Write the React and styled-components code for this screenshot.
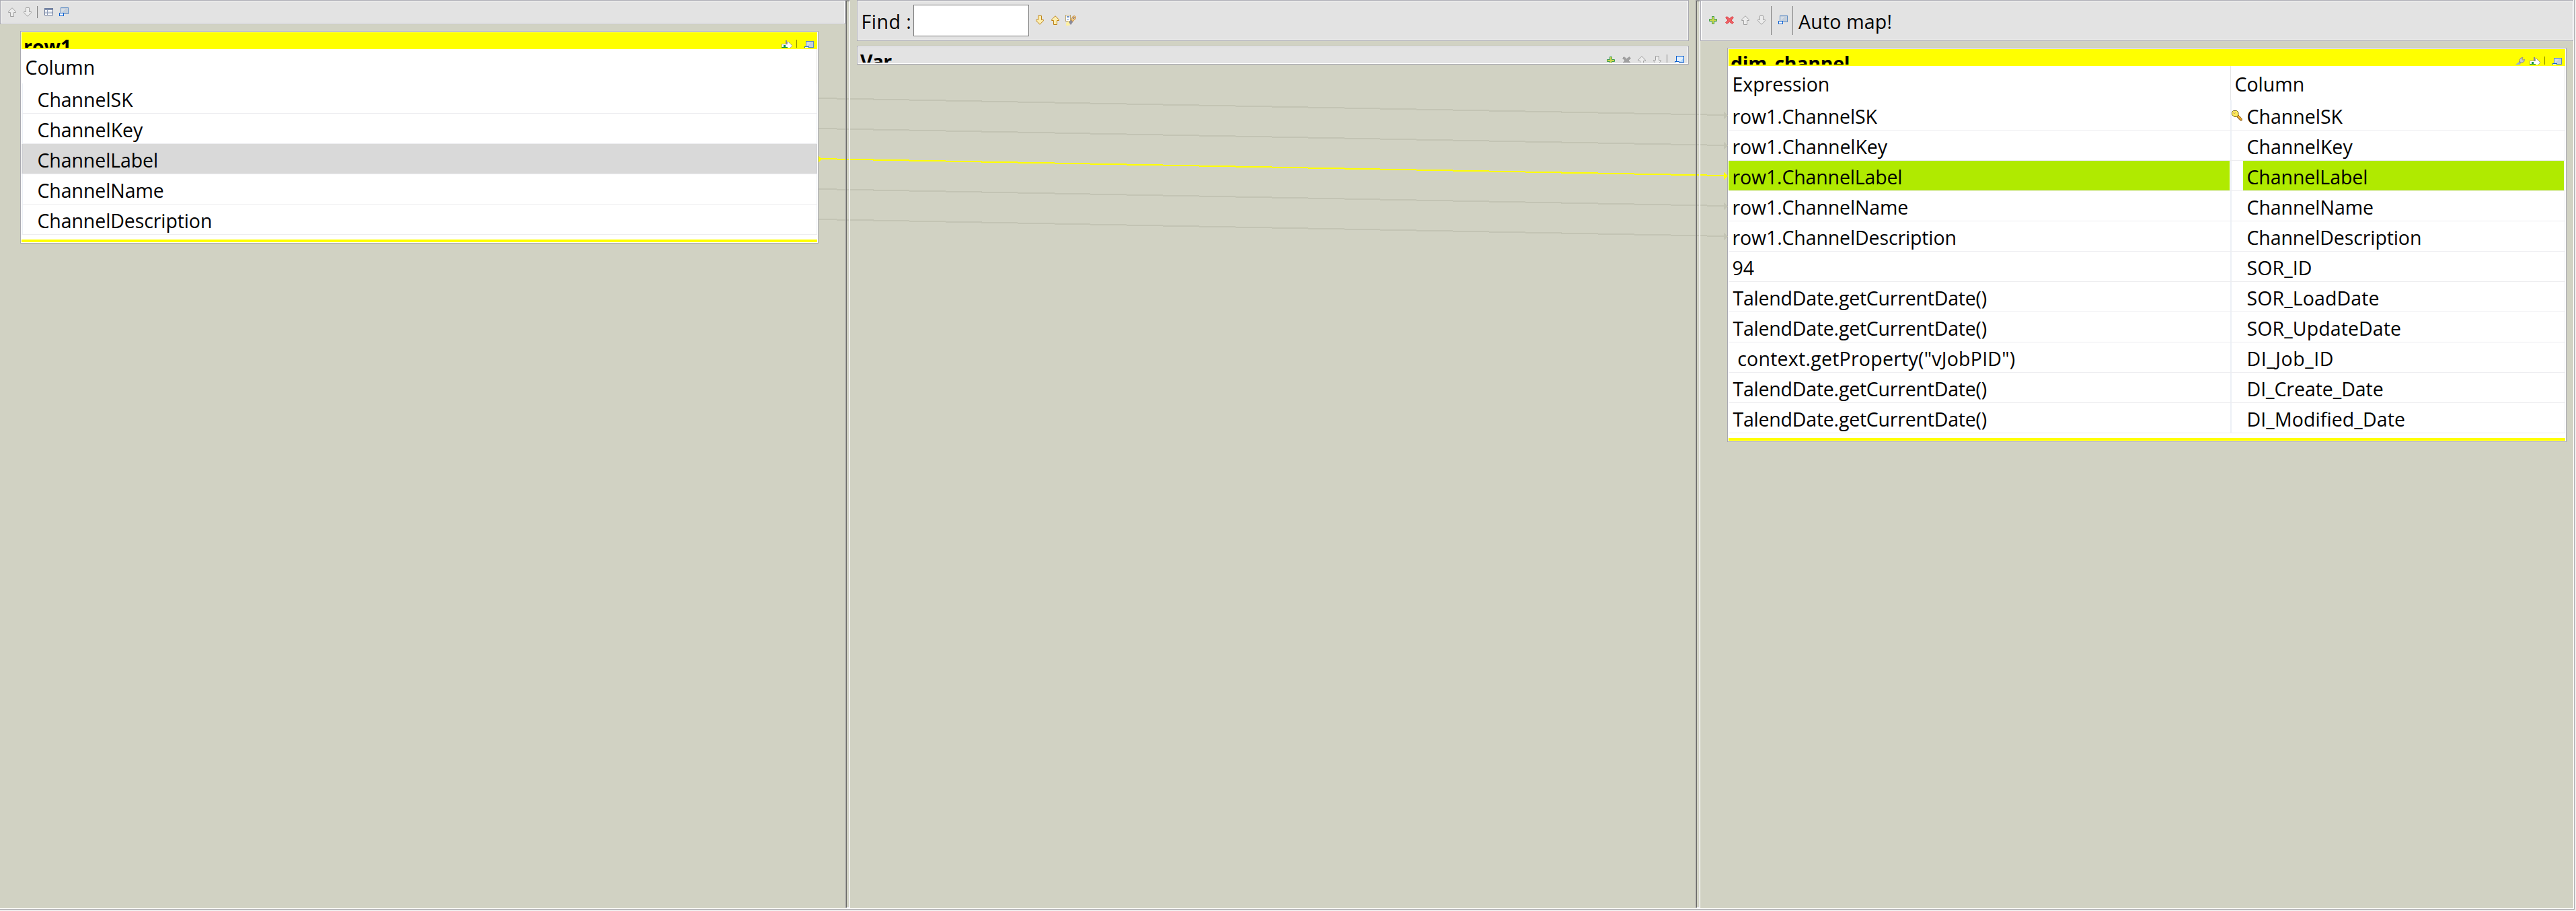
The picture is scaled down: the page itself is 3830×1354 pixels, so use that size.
import React from 'react';
import styled, { createGlobalStyle, css } from 'styled-components';

const Global = createGlobalStyle`
  html, body { margin: 0; padding: 0; background: #f0f0f0; }
  *, *::before, *::after { box-sizing: border-box; }
  body { font-family: "Open Sans", "Noto Sans", sans-serif; color: #000; overflow: hidden; }
  svg { display: block; flex: none; }
`;

const FACE = '#e3e3e3';
const EDGE = '#a9a9b1';
const GRID = '#ededf0';
const YELLOW = '#ffff00';
const GREEN = '#b0ea00';

const Frame = styled.div`
  position: relative;
  width: 3828px;
  height: 1352px;
  display: grid;
  grid-template-columns: 1257px 7px 1257px 7px 1298px;
  background: #d1d2c3;
  border-right: 1px solid #a9a9ad;
  border-bottom: 1px solid #a9a9ad;
  box-shadow: inset -1px -1px 0 #fff;
  padding: 0 1px 1px 0;
`;

const Pane = styled.section`
  display: flex;
  flex-direction: column;
  align-items: stretch;
  padding: ${(p) => p.$pad || 0};
`;

const Sash = styled.div`
  position: relative;
  z-index: 2;
  border: 1px solid;
  border-color: #a0a0a0 #fff #fff #a0a0a0;
  box-shadow: inset 1px 1px 0 #696969, inset -1px -1px 0 #e3e3e3;
`;

const Bar = styled.div`
  display: flex;
  align-items: flex-start;
  height: ${(p) => p.$h}px;
  border: 1px solid ${EDGE};
  box-shadow: inset 0 0 0 1px #fff;
  background: ${FACE};
  overflow: hidden;
`;

const Slot = styled.span`
  display: block;
  flex: none;
  margin: ${(p) => p.$t}px 0 0 ${(p) => p.$l}px;
`;

const Separator = styled.i`
  flex: none;
  width: 1px;
  height: ${(p) => p.$h}px;
  margin: ${(p) => p.$t}px 0 0 ${(p) => p.$l}px;
  background: ${(p) => p.$c || '#808080'};
`;

const Label = styled.span`
  flex: none;
  width: ${(p) => (p.$w ? `${p.$w}px` : 'auto')};
  font-size: 28.5px;
  line-height: 40px;
  white-space: pre;
  letter-spacing: ${(p) => p.$ls || 0}px;
  margin: 11px 0 0 ${(p) => p.$l || 0}px;
`;

const Search = styled.input`
  flex: none;
  width: 172px;
  height: 47px;
  margin: 6px 0 0 ${(p) => p.$l}px;
  padding: 0 8px;
  border: 1px solid #7a7a7a;
  background: #fff;
  font: inherit;
`;

const Card = styled.div`
  border: 1px solid ${EDGE};
  padding: 1px;
  background: #fff;
`;

const TitleBar = styled.div`
  display: flex;
  align-items: flex-start;
  justify-content: space-between;
  overflow: hidden;
  height: ${(p) => p.$h}px;
  background: ${(p) => p.$bg};
  border-bottom: ${(p) => p.$lip}px solid ${(p) => p.$bg};
`;

const Title = styled.strong`
  flex: none;
  font-size: 28.5px;
  font-weight: 700;
  line-height: 40px;
  white-space: pre;
  letter-spacing: ${(p) => p.$ls || 0}px;
  margin: 1px 0 0 ${(p) => p.$l}px;
`;

const Tools = styled.div`
  display: flex;
  align-items: flex-start;
  padding-right: ${(p) => p.$r}px;
`;

const Footer = styled.div`
  height: 4px;
  margin-top: 7px;
  background: ${YELLOW};
`;

const Row = styled.div`
  display: grid;
  grid-template-columns: ${(p) => p.$cols};
  height: ${(p) => (p.$head ? 51 : 45)}px;
  padding-left: ${(p) => p.$inset || 0}px;
  border-bottom: ${(p) => (p.$head ? 0 : 1)}px solid ${GRID};
  background: ${(p) => p.$bg || 'transparent'};
`;

const Cell = styled.div`
  display: flex;
  align-items: flex-start;
  padding-left: ${(p) => p.$l}px;
  font-size: 28.5px;
  line-height: ${(p) => (p.$head ? 54 : 48)}px;
  height: 100%;
  overflow: hidden;
  white-space: pre;
  letter-spacing: ${(p) => p.$ls || 0}px;
  ${(p) => p.$bg && css`background: ${p.$bg};`}
  ${(p) => p.$rule && css`box-shadow: ${p.$rule};`}
`;

const Wires = styled.svg`
  position: absolute;
  left: 0;
  top: 0;
  pointer-events: none;
`;

const Up = ({ fill = '#ececec', stroke = '#a0a0a0' }) => (
  <svg width="12" height="14" viewBox="0 0 12 14"><path d="M6 .7 11.4 6.2V7.5H8.5V13.5H3.5V7.5H.6V6.2Z" fill={fill} stroke={stroke} /></svg>
);
const Down = ({ fill = '#ececec', stroke = '#a0a0a0' }) => (
  <svg width="12" height="14" viewBox="0 0 12 14"><path d="M6 13.3 11.4 7.8V6.5H8.5V.5H3.5V6.5H.6V7.8Z" fill={fill} stroke={stroke} /></svg>
);
const Plus = () => (
  <svg width="12" height="12" viewBox="0 0 12 12">
    <path d="M4.5.5h3v4h4v3h-4v4h-3v-4h-4v-3h4z" fill="#c9d64c" stroke="#3f9c50" />
  </svg>
);
const Cross = ({ fill = '#ee5f63', stroke = '#d9484e' }) => (
  <svg width="13" height="12" viewBox="0 0 13 12">
    <path d="M2.5.5 6.5 3.5 10.5.5 12.5 2.5 9 6 12.5 9.5 10.5 11.5 6.5 8.5 2.5 11.5.5 9.5 4 6 .5 2.5Z" fill={fill} stroke={stroke} />
  </svg>
);
const TableIcon = () => (
  <svg width="13" height="11" viewBox="0 0 13 11" shapeRendering="crispEdges">
    <rect width="13" height="11" fill="#6b7a9b" />
    <rect x="1" y="1" width="11" height="1" fill="#a9b8cf" />
    <rect x="1" y="3" width="11" height="7" fill="#fff" />
    <path d="M1 4.5H12M1 6.5H12M1 8.5H12" stroke="#b9c3d4" />
    <path d="M4.5 3V10" stroke="#8d9ab5" />
  </svg>
);
const Restore = ({ vivid }) => (
  <svg width="14" height="13" viewBox="0 0 14 13" shapeRendering="crispEdges">
    <rect x="2.5" y=".5" width="11" height="9" fill={vivid ? '#e2effc' : '#c3cedb'} stroke={vivid ? '#0f62d0' : '#5b8bc4'} />
    {vivid ? <path d="M8 9H13V3Z" fill="#b5d8fa" /> : <path d="M3 2H9L3 8Z" fill="#d6dde6" />}
    <rect x=".5" y="8.5" width="6" height="4" fill="#fff" stroke="#0f62d0" />
  </svg>
);
const Export = () => (
  <svg width="16" height="14" viewBox="0 0 16 14" shapeRendering="crispEdges">
    <path d="M.5 5.5H8.5V2.5H10.5L15.5 7.5V8.5L11 13H.5Z" fill="#fff" stroke="#a3a3a3" />
    <rect x="6" y="0" width="2" height="6" fill="#8b8b8b" />
    <path d="M0 10H3V7H6V10H9V12H0Z" fill="#0f9444" />
  </svg>
);
const Wrench = () => (
  <svg width="15" height="14" viewBox="0 0 15 14">
    <path d="M7.5 8.5 1 13.5" stroke="#8fb0e0" strokeWidth="4" />
    <path d="M7 8 11 5" stroke="#8e8e94" strokeWidth="3.6" />
    <path d="M7 4 9 1.2 12 .6 10.6 3 12 4.4 14.4 3.2 13.8 6.4 11 8H8Z" fill="#c9c9cf" stroke="#8b8b92" />
  </svg>
);
const Highlight = () => (
  <svg width="16" height="16" viewBox="0 0 16 16">
    <rect x=".5" y=".5" width="7" height="9" fill="#fff" stroke="#b9a36a" />
    <path d="M2 2.5H6M2 4.5H6M2 6.5H5" stroke="#6d8fc7" />
    <path d="M1 16V12L5 9 8 13 6 16Z" fill="#fff0a0" />
    <path d="M5 11 9 7 11 11 8 15Z" fill="#8a8a9a" />
    <path d="M8.5 7 11 2.5 13.5 1.5 15.5 3 15 6 11 10Z" fill="#f3cb86" stroke="#c58a3c" />
    <path d="M11.5 6 13.5 3.5" stroke="#6f6f90" strokeWidth="1.3" />
  </svg>
);
const Key = () => (
  <svg width="16" height="16" viewBox="0 0 16 16">
    <path d="M7 7.5 9 6 15.2 12.5V15H12.6V13.2H10.8V11.4H9.2Z" fill="#f5b32e" stroke="#8a5a12" />
    <path d="M2.5.5H7.5L10 3V7L7.5 9.5H4L.5 6.5V2.5Z" fill="#fbe95a" stroke="#7d6a1c" />
    <circle cx="4" cy="3.6" r="1.1" fill="#fff" stroke="#c9962a" strokeWidth=".8" />
  </svg>
);
const gold = { fill: '#fdeeb0', stroke: '#bd8216' };

const source = [
  { name: 'ChannelSK', ls: -0.05 },
  { name: 'ChannelKey', ls: -0.04 },
  { name: 'ChannelLabel', ls: -0.1 },
  { name: 'ChannelName', ls: -0.08 },
  { name: 'ChannelDescription', ls: -0.1 },
];
const NOW = 'TalendDate.getCurrentDate()';
const target = [
  { expr: 'row1.ChannelSK', els: -0.13, col: 'ChannelSK', isKey: true },
  { expr: 'row1.ChannelKey', els: -0.1, col: 'ChannelKey' },
  { expr: 'row1.ChannelLabel', els: -0.15, col: 'ChannelLabel', cls: -0.08 },
  { expr: 'row1.ChannelName', els: -0.13, col: 'ChannelName', cls: -0.06 },
  { expr: 'row1.ChannelDescription', els: -0.13, col: 'ChannelDescription', cls: -0.1 },
  { expr: '94', col: 'SOR_ID', cls: 0.1 },
  { expr: NOW, els: -0.22, col: 'SOR_LoadDate', cls: 0.1 },
  { expr: NOW, els: -0.22, col: 'SOR_UpdateDate', cls: 0.1 },
  { expr: ' context.getProperty("vJobPID")', els: 0.25, col: 'DI_Job_ID', cls: 0.55 },
  { expr: NOW, els: -0.22, col: 'DI_Create_Date', cls: -0.05 },
  { expr: NOW, els: -0.22, col: 'DI_Modified_Date', cls: 0.1 },
];
const SELECTED = 2;

function Connectors() {
  return (
    <Wires width="3826" height="660" viewBox="0 0 3826 660" shapeRendering="crispEdges">
      {source.map(({ name }, i) => {
        const y = 146 + 45 * i;
        const c = i === SELECTED ? YELLOW : '#c3c4b4';
        return (
          <g key={name}>
            <path d={`M1217 ${y}C1367 ${y} 2413 ${y + 25} 2564 ${y + 25}`} fill="none" stroke={c} strokeWidth="2" />
            {i === SELECTED && <path d={`M1217 ${y - 5}L1222 ${y + 0.5}L1217 ${y + 6}Z`} fill={c} />}
            <path d={`M2563 ${y + 20}L2568.5 ${y + 25.5}L2563 ${y + 31}Z`} fill={c} />
          </g>
        );
      })}
    </Wires>
  );
}

export default function App() {
  return (
    <>
      <Global />
      <Frame>
        <Pane>
          <Bar $h={36}>
            <Slot $l={11} $t={10}><Up /></Slot>
            <Slot $l={11} $t={10}><Down /></Slot>
            <Separator $l={8} $t={8} $h={18} />
            <Slot $l={10} $t={11}><TableIcon /></Slot>
            <Slot $l={9} $t={10}><Restore /></Slot>
          </Bar>
          <Pane $pad="10px 40px 0 30px">
            <Card>
              <TitleBar $h={25} $bg={YELLOW} $lip={2}>
                <Title $l={3}>row1</Title>
                <Tools $r={5}>
                  <Slot $l={0} $t={12}><Export /></Slot>
                  <Separator $l={6} $t={11} $h={12} $c="#8a8a00" />
                  <Slot $l={11} $t={13}><Restore /></Slot>
                </Tools>
              </TitleBar>
              <Row $head $cols="1fr">
                <Cell $head $l={5.5} $ls={0} $rule="inset -1px 0 0 #e5e5e5">Column</Cell>
              </Row>
              {source.map(({ name, ls }, i) => (
                <Row key={name} $cols="1fr" $inset={1} $bg={i === SELECTED ? '#d9d9d9' : undefined}>
                  <Cell
                    $l={22.5}
                    $ls={ls}
                    $rule={i === SELECTED
                      ? 'inset 1px 0 0 #cdced3, inset -1px 0 0 #cdced3'
                      : 'inset 1px 0 0 #ecf0f6, inset -1px 0 0 #ecf0f6'}
                  >
                    {name}
                  </Cell>
                </Row>
              ))}
              <Footer />
            </Card>
          </Pane>
        </Pane>
        <Sash />
        <Pane $pad="0 10px">
          <Bar $h={61}>
            <Label $l={5.5} $w={73.5} $ls={0.5}>Find :</Label>
            <Search $l={4} aria-label="Find" />
            <Slot $l={10} $t={22}><Down {...gold} /></Slot>
            <Slot $l={11} $t={22}><Up {...gold} /></Slot>
            <Slot $l={9} $t={21}><Highlight /></Slot>
          </Bar>
          <Pane $pad="7px 0 0">
            <Card>
              <TitleBar $h={24} $bg={FACE} $lip={1}>
                <Title $l={3} $ls={-0.8}>Var</Title>
                <Tools $r={5}>
                  <Slot $l={0} $t={14}><Plus /></Slot>
                  <Slot $l={11} $t={14}><Cross fill="#a0a0a0" stroke="#a0a0a0" /></Slot>
                  <Slot $l={10} $t={13}><Up /></Slot>
                  <Slot $l={11} $t={13}><Down /></Slot>
                  <Separator $l={8} $t={11} $h={12} />
                  <Slot $l={11} $t={13}><Restore vivid /></Slot>
                </Tools>
              </TitleBar>
            </Card>
          </Pane>
        </Pane>
        <Sash />
        <Pane>
          <Bar $h={61}>
            <Slot $l={12} $t={23}><Plus /></Slot>
            <Slot $l={12} $t={23}><Cross /></Slot>
            <Slot $l={11} $t={22}><Up /></Slot>
            <Slot $l={12} $t={22}><Down /></Slot>
            <Separator $l={8} $t={8} $h={43} />
            <Slot $l={10} $t={22}><Restore /></Slot>
            <Separator $l={7} $t={8} $h={43} />
            <Label $l={8} $ls={0.2}>Auto map!</Label>
          </Bar>
          <Pane $pad="10px 10px 0 40px">
            <Card>
              <TitleBar $h={25} $bg={YELLOW} $lip={2}>
                <Title $l={3} $ls={-0.25}>dim_channel</Title>
                <Tools $r={5}>
                  <Slot $l={0} $t={12}><Wrench /></Slot>
                  <Slot $l={7} $t={12}><Export /></Slot>
                  <Separator $l={6} $t={11} $h={12} $c="#8a8a00" />
                  <Slot $l={11} $t={13}><Restore /></Slot>
                </Tools>
              </TitleBar>
              <Row $head $cols="746px 498px">
                <Cell $head $l={5.5}>Expression</Cell>
                <Cell $head $l={6.5} $rule="inset 1px 0 0 #e5e5e5, inset -1px 0 0 #e5e5e5">Column</Cell>
              </Row>
              {target.map(({ expr, els, col, cls, isKey }, i) => (
                <Row key={col} $cols="745px 1px 19px 477px 2px">
                  <Cell $l={expr === NOW ? 6.5 : 5.5} $ls={els} $bg={i === SELECTED ? GREEN : ''}>{expr}</Cell>
                  <Cell $l={0} />
                  <Cell $l={2} $rule="inset 2px 0 0 #ecf0f6">{isKey && <Slot $l={0} $t={15}><Key /></Slot>}</Cell>
                  <Cell $l={5.5} $ls={cls} $bg={i === SELECTED ? GREEN : ''}>{col}</Cell>
                  <Cell $l={0} $rule="inset -1px 0 0 #ecf0f6" />
                </Row>
              ))}
              <Footer />
            </Card>
          </Pane>
        </Pane>
        <Connectors />
      </Frame>
    </>
  );
}
